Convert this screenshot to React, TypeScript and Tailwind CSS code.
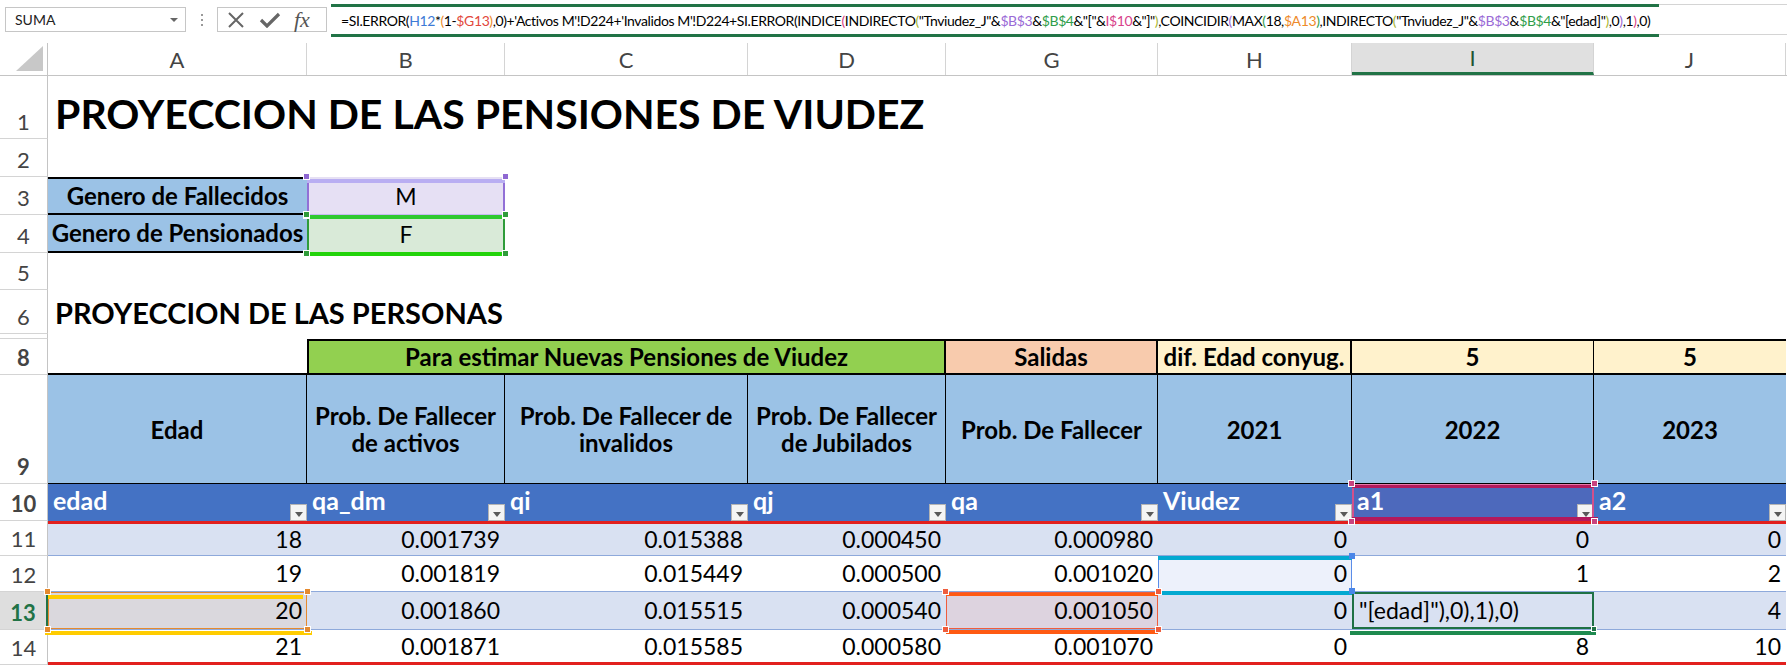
import React from 'react';

type Col = { key: string; w: string };

const COLS: Col[] = [
  { key: 'A', w: 'w-[259px]' },
  { key: 'B', w: 'w-[198px]' },
  { key: 'C', w: 'w-[243px]' },
  { key: 'D', w: 'w-[198px]' },
  { key: 'G', w: 'w-[212px]' },
  { key: 'H', w: 'w-[194px]' },
  { key: 'I', w: 'w-[242px]' },
  { key: 'J', w: 'w-[192px]' },
];

const ROWS = [
  ['18', '0.001739', '0.015388', '0.000450', '0.000980', '0', '0', '0'],
  ['19', '0.001819', '0.015449', '0.000500', '0.001020', '0', '1', '2'],
  ['20', '0.001860', '0.015515', '0.000540', '0.001050', '0', '"[edad]"),0),1),0)', '4'],
  ['21', '0.001871', '0.015585', '0.000580', '0.001070', '0', '8', '10'],
];

const TABLE_HEAD = ['edad', 'qa_dm', 'qi', 'qj', 'qa', 'Viudez', 'a1', 'a2'];

function RowHead({ n, active }: { n: string; active?: boolean }) {
  return (
    <div
      className={`flex w-[48px] shrink-0 items-end justify-center border-b border-b-[#d4d4d4] pb-[5px] text-[22px] leading-none ${
        active
          ? 'border-r-2 border-r-[#217346] bg-[#dedede] font-bold text-[#217346]'
          : 'border-r border-r-[#c4c4c4] text-[#444]'
      }`}
    >
      {n}
    </div>
  );
}

function FilterBtn() {
  return (
    <span className="absolute bottom-0 right-0 flex h-[17px] w-[17px] items-end justify-center border border-[#b4b4b4] bg-[#f4f4f4] pb-[3px]">
      <span className="h-0 w-0 border-x-[4px] border-t-[5px] border-x-transparent border-t-[#595959]" />
    </span>
  );
}

function Corners({ color }: { color: string }) {
  return (
    <>
      <span className={`absolute left-[-4px] top-[-4px] z-20 h-[7px] w-[7px] border border-white ${color}`} />
      <span className={`absolute right-[-4px] top-[-4px] z-20 h-[7px] w-[7px] border border-white ${color}`} />
      <span className={`absolute bottom-[-4px] left-[-4px] z-20 h-[7px] w-[7px] border border-white ${color}`} />
      <span className={`absolute bottom-[-4px] right-[-4px] z-20 h-[7px] w-[7px] border border-white ${color}`} />
    </>
  );
}

function FormulaText() {
  const b = 'text-[#3d7ad6]';
  const r = 'text-[#e2473b]';
  const o = 'text-[#ee8a2a]';
  const p = 'text-[#9a6ad6]';
  const g = 'text-[#2f9e4a]';
  const m = 'text-[#d8428a]';
  const y = 'text-[#a9b52f]';
  return (
    <span className="whitespace-nowrap">
      =SI.ERROR(<span className={b}>H12</span>*<span className={o}>(</span>1-<span className={r}>$G13</span>
      <span className={o}>)</span>,0)+'Activos M'!D224+'Invalidos M'!D224+SI.ERROR(INDICE<span className={m}>(</span>
      INDIRECTO<span className={y}>(</span>"Tnviudez_J"&amp;<span className={p}>$B$3</span>&amp;
      <span className={g}>$B$4</span>&amp;"["&amp;<span className={m}>I$10</span>&amp;"]"<span className={y}>)</span>
      ,COINCIDIR<span className={p}>(</span>MAX<span className={g}>(</span>18,<span className={o}>$A13</span>
      <span className={g}>)</span>,INDIRECTO<span className={y}>(</span>"Tnviudez_J"&amp;<span className={p}>$B$3</span>
      &amp;<span className={g}>$B$4</span>&amp;"[edad]"<span className={y}>)</span>,0<span className={p}>)</span>,1
      <span className={m}>)</span>,0)
    </span>
  );
}

export default function App() {
  const cell = 'relative flex shrink-0 items-center';
  return (
    <div className="h-[669px] w-[1787px] overflow-hidden bg-white font-['Lato',sans-serif] text-black">
      {/* formula bar */}
      <div className="flex h-[43px] items-start pt-[7px]">
        <div className="ml-[5px] flex h-[25px] w-[181px] items-center justify-between border border-[#c6c6c6] pl-[9px] pr-[7px] text-[14px] text-[#222]">
          SUMA
          <span className="h-0 w-0 border-x-[4px] border-t-[4px] border-x-transparent border-t-[#666]" />
        </div>
        <div className="flex h-[25px] w-[31px] flex-col items-center justify-center gap-[3px]">
          <span className="h-[2px] w-[2px] bg-[#999]" />
          <span className="h-[2px] w-[2px] bg-[#999]" />
          <span className="h-[2px] w-[2px] bg-[#999]" />
        </div>
        <div className="flex h-[25px] w-[110px] items-center border border-[#c6c6c6] pl-[9px]">
          <svg width="18" height="16" viewBox="0 0 18 16">
            <path d="M2 1 L16 15 M16 1 L2 15" stroke="#666" strokeWidth="2" fill="none" />
          </svg>
          <svg className="ml-[14px]" width="22" height="16" viewBox="0 0 22 16">
            <path d="M2 8 L8 14 L20 2" stroke="#666" strokeWidth="3.2" fill="none" />
          </svg>
          <span className="ml-[13px] font-['Liberation_Serif',serif] text-[22px] italic leading-none text-[#555]">fx</span>
        </div>
        <div className="ml-[4px] mt-[-3px] h-[31px] flex-1 border-y border-[#d4d4d4]">
          <div className="-my-px flex h-[33px] w-[1328px] items-center overflow-hidden border-y-[3px] border-[#217346] pl-[10px] text-[14px] tracking-[-0.4px] text-black">
            <FormulaText />
          </div>
        </div>
      </div>

      {/* column headers */}
      <div className="flex h-[33px] border-b border-[#c4c4c4]">
        <div className="flex w-[48px] shrink-0 items-end justify-end border-r border-[#c4c4c4] p-[4px]">
          <svg width="27" height="25" viewBox="0 0 27 25">
            <polygon points="27,0 27,25 0,25" fill="#c8c8c8" />
          </svg>
        </div>
        {COLS.map((c) => (
          <div
            key={c.key}
            className={`${c.w} flex shrink-0 items-center justify-center border-r border-[#d4d4d4] text-[22px] ${
              c.key === 'I' ? 'border-b-[3px] border-b-[#217346] bg-[#e0e0e0] text-[#1f5533]' : 'text-[#444]'
            }`}
          >
            {c.key}
          </div>
        ))}
      </div>

      {/* row 1 */}
      <div className="flex h-[63px]">
        <RowHead n="1" />
        <div className="flex items-end whitespace-nowrap pb-[5px] pl-[7px] text-[41px] font-bold leading-none">
          PROYECCION DE LAS PENSIONES DE VIUDEZ
        </div>
      </div>

      {/* row 2 */}
      <div className="flex h-[38px]">
        <RowHead n="2" />
      </div>

      {/* row 3 */}
      <div className="flex h-[38px]">
        <RowHead n="3" />
        <div className={`${cell} w-[259px] justify-center border-y-2 border-black bg-[#9bc2e6] text-[24px] font-bold`}>
          Genero de Fallecidos
        </div>
        <div className={`${cell} w-[198px] justify-center bg-[#e6e0f4] text-[23px]`}>
          M
          <span className="absolute inset-0 border-x-2 border-b border-x-[#9270d6] border-b-[#c6baf2]" />
          <span className="absolute left-0 right-0 top-[2px] h-[4px] bg-[#b9aef2]" />
          <Corners color="bg-[#8f68d2]" />
        </div>
      </div>

      {/* row 4 */}
      <div className="flex h-[38px]">
        <RowHead n="4" />
        <div className={`${cell} w-[259px] justify-center border-b-2 border-black bg-[#9bc2e6] text-[24px] font-bold`}>
          Genero de Pensionados
        </div>
        <div className={`${cell} w-[198px] justify-center bg-[#d9ead8] text-[23px]`}>
          F
          <span className="absolute inset-0 border-x-2 border-x-[#2f9c3a]" />
          <span className="absolute left-0 right-0 top-0 h-[4px] bg-[#2fc92f]" />
          <span className="absolute bottom-[-3px] left-0 right-0 z-10 h-[4px] bg-[#22d30a]" />
          <Corners color="bg-[#2f9c3a]" />
        </div>
      </div>

      {/* row 5 */}
      <div className="flex h-[37px]">
        <RowHead n="5" />
      </div>

      {/* row 6 */}
      <div className="flex h-[44px]">
        <RowHead n="6" />
        <div className="flex items-end whitespace-nowrap pb-[7px] pl-[7px] text-[29px] font-bold leading-none">
          PROYECCION DE LAS PERSONAS
        </div>
      </div>

      {/* row 7 hidden */}
      <div className="flex h-[5px]">
        <div className="w-[48px] shrink-0 border-b border-r border-b-[#d4d4d4] border-r-[#c4c4c4]" />
      </div>

      {/* row 8 */}
      <div className="flex h-[36px] text-[24px] font-bold">
        <RowHead n="8" />
        <div className={`${cell} w-[259px] border-b-2 border-black`} />
        <div className={`${cell} w-[639px] justify-center border-2 border-black bg-[#92d050]`}>
          Para estimar Nuevas Pensiones de Viudez
        </div>
        <div className={`${cell} w-[212px] justify-center border-y-2 border-r-2 border-black bg-[#f8cbad]`}>Salidas</div>
        <div className={`${cell} w-[194px] justify-center border-y-2 border-r-2 border-black bg-[#fff2cc]`}>
          dif. Edad conyug.
        </div>
        <div className={`${cell} w-[242px] justify-center border-y-2 border-r border-black bg-[#fff2cc]`}>5</div>
        <div className={`${cell} w-[192px] justify-center border-y-2 border-black bg-[#fff2cc]`}>5</div>
      </div>

      {/* row 9 */}
      <div className="flex h-[109px] text-[24px] font-bold leading-[27px]">
        <RowHead n="9" />
        <div className={`${cell} w-[259px] justify-center border-b border-r border-black bg-[#9bc2e6]`}>Edad</div>
        <div className={`${cell} w-[198px] justify-center border-b border-r border-black bg-[#9bc2e6] text-center`}>
          Prob. De Fallecer
          <br />
          de activos
        </div>
        <div className={`${cell} w-[243px] justify-center border-b border-r border-black bg-[#9bc2e6] text-center`}>
          Prob. De Fallecer de
          <br />
          invalidos
        </div>
        <div className={`${cell} w-[198px] justify-center border-b border-r border-black bg-[#9bc2e6] text-center`}>
          Prob. De Fallecer
          <br />
          de Jubilados
        </div>
        <div className={`${cell} w-[212px] justify-center border-b border-r border-black bg-[#9bc2e6]`}>Prob. De Fallecer</div>
        <div className={`${cell} w-[194px] justify-center border-b border-r border-black bg-[#9bc2e6]`}>2021</div>
        <div className={`${cell} w-[242px] justify-center border-b border-r border-black bg-[#9bc2e6]`}>2022</div>
        <div className={`${cell} w-[192px] justify-center border-b border-black bg-[#9bc2e6]`}>2023</div>
      </div>

      {/* row 10 - table header */}
      <div className="flex h-[37px] text-[25px] font-bold text-white">
        <RowHead n="10" />
        {TABLE_HEAD.map((t, i) => (
          <div
            key={t}
            className={`${cell} ${COLS[i].w} pb-[3px] pl-[5px] ${t === 'a1' ? 'bg-[#4d69bc]' : 'bg-[#4472c4]'}`}
          >
            {t}
            <FilterBtn />
            {t === 'a1' && (
              <>
                <span className="absolute inset-0 border-x-2 border-x-[#d2508b]" />
                <span className="absolute left-0 right-0 top-0 h-[4px] border-t border-t-[#e77aa8] bg-[#b3195d]" />
                <span className="absolute bottom-0 left-0 right-[-4px] z-10 h-[4px] bg-[#b3195d]" />
                <Corners color="bg-[#c8437f]" />
              </>
            )}
          </div>
        ))}
      </div>

      {/* rows 11-14 */}
      {ROWS.map((row, ri) => {
        const n = String(11 + ri);
        const band = ri % 2 === 0 ? 'bg-[#d9e1f2]' : 'bg-white';
        const edge =
          ri === 0
            ? 'border-t-[3px] border-t-[#e2201e] border-b border-b-[#8ea9db]'
            : ri === 3
              ? 'border-b-[3px] border-b-[#e2201e]'
              : 'border-b border-b-[#8ea9db]';
        return (
          <div key={n} className={`flex ${ri === 2 ? 'h-[38px]' : ri === 1 ? 'h-[36px]' : 'h-[35px]'} text-[23px]`}>
            <RowHead n={n} active={ri === 2} />
            {row.map((v, ci) => {
              const isA13 = ri === 2 && ci === 0;
              const isG13 = ri === 2 && ci === 4;
              const isH12 = ri === 1 && ci === 5;
              const isI13 = ri === 2 && ci === 6;
              let bg = band;
              if (isA13) bg = 'bg-[#dad8dd]';
              if (isG13) bg = 'bg-[#ddd3df]';
              if (isH12) bg = 'bg-[#edf1fb]';
              return (
                <div
                  key={ci}
                  className={`${cell} ${COLS[ci].w} ${edge} ${bg} ${isI13 ? 'justify-start pl-[7px]' : 'justify-end pr-[5px]'}`}
                >
                  {v}
                  {isA13 && (
                    <>
                      <span className="absolute inset-0 border border-[#e58a2e]" />
                      <span className="absolute left-0 right-[4px] top-[3px] h-[4px] bg-[#ffcc00]" />
                      <span className="absolute bottom-[-6px] left-[-3px] right-[-5px] z-10 h-[4px] bg-[#ffcc00]" />
                      <Corners color="bg-[#e58a2e]" />
                    </>
                  )}
                  {isG13 && (
                    <>
                      <span className="absolute inset-0 border border-[#ef5d3d]" />
                      <span className="absolute left-0 right-0 top-[1px] h-[3px] bg-[#ff5a12]" />
                      <span className="absolute bottom-[-5px] left-0 right-0 z-10 h-[4px] bg-[#ff5a12]" />
                      <Corners color="bg-[#ef5d3d]" />
                    </>
                  )}
                  {isH12 && (
                    <>
                      <span className="absolute inset-y-0 left-0 w-px bg-[#5b8de8]" />
                      <span className="absolute inset-y-0 right-0 w-px bg-[#5b8de8]" />
                      <span className="absolute left-0 right-0 top-0 h-[4px] bg-[#03a9d1]" />
                      <span className="absolute bottom-[-4px] left-0 right-0 z-10 h-[4px] bg-[#03a9d1]" />
                      <span className="absolute right-[-3px] top-[-3px] z-20 h-[6px] w-[6px] bg-[#4a86e8]" />
                      <span className="absolute bottom-[-3px] right-[-3px] z-20 h-[6px] w-[6px] bg-[#4a86e8]" />
                    </>
                  )}
                  {isI13 && (
                    <>
                      <span className="absolute inset-0 z-10 border-2 border-[#1e7145]" />
                      <span className="absolute bottom-[-6px] left-[-2px] right-[-2px] z-10 h-[4px] bg-[#1e8a4f]" />
                      <span className="absolute bottom-[-3px] right-[-3px] z-20 h-[6px] w-[6px] border border-white bg-[#1e7145]" />
                    </>
                  )}
                </div>
              );
            })}
          </div>
        );
      })}
    </div>
  );
}
